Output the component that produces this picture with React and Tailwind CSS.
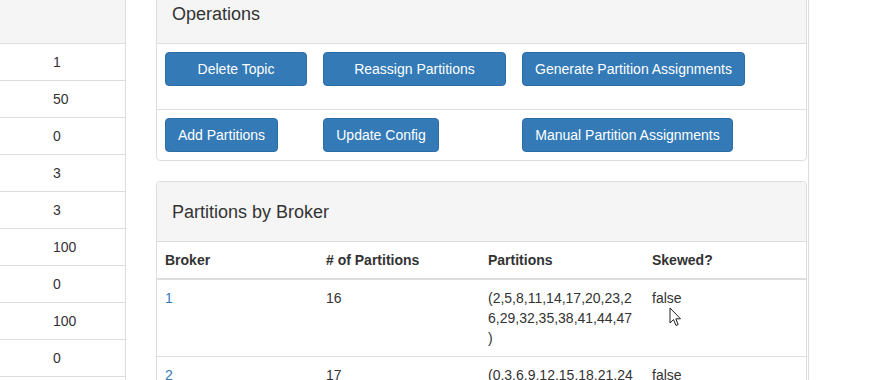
import React from 'react';

const leftValues = ['1', '50', '0', '3', '3', '100', '0', '100', '0', ''];

const opsRows = [
    {
        height: 'h-[65px]',
        buttons: [
            { label: 'Delete Topic', w: 'w-[142px]' },
            { label: 'Reassign Partitions', w: 'w-[183px]' },
            { label: 'Generate Partition Assignments', w: 'w-[223px]' },
        ],
    },
    {
        height: 'h-[51px]',
        buttons: [
            { label: 'Add Partitions', w: 'w-[113px]' },
            { label: 'Update Config', w: 'w-[116px]' },
            { label: 'Manual Partition Assignments', w: 'w-[211px]' },
        ],
    },
];

// partitions lists, pre-wrapped the way the cell breaks them
const brokers = [
    { id: 1, count: 16, parts: ['(2,5,8,11,14,17,20,23,2', '6,29,32,35,38,41,44,47', ')'], skewed: 'false' },
    { id: 2, count: 17, parts: ['(0,3,6,9,12,15,18,21,24', ',27,30,33,36,39,42,45,4', '8)'], skewed: 'false' },
];

const Button = ({ label, w }) => (
    <button className={`${w} h-[34px] rounded-[4px] bg-[#337ab7] border border-[#2e6da4] text-white text-[14px] leading-[20px] text-center`}>
        {label}
    </button>
);

const Cursor = () => (
    <svg className="absolute left-[669px] top-[307px]" width="13" height="20" viewBox="0 0 13 20">
        <path d="M1 1 L1 16 L4.5 12.5 L7 18.5 L9.2 17.5 L6.8 11.8 L11.5 11.8 Z" fill="#fff" stroke="#222" strokeWidth="1" strokeLinejoin="round" />
    </svg>
);

export default function App() {
    return (
        <div className="relative w-[890px] h-[380px] overflow-hidden bg-white text-[#333] text-[14px] leading-[20px] font-['Liberation_Sans',Arial,sans-serif]">
            <div className="flex items-start">
                {/* left stats column */}
                <div className="w-[126px] shrink-0 border-r border-[#ddd]">
                    <div className="h-[44px] bg-[#f5f5f5] border-b border-[#ddd]"></div>
                    {leftValues.map((v, i) => (
                        <div key={i} className="h-[37px] border-b border-[#ddd] pl-[53px] flex items-center">
                            {v}
                        </div>
                    ))}
                </div>

                {/* main panels */}
                <div className="ml-[30px] w-[651px] shrink-0 -mt-[17px]">
                    <div className="border border-[#ddd] rounded-[4px] bg-white">
                        <div className="h-[60px] bg-[#f5f5f5] border-b border-[#ddd] px-[15px] flex items-center rounded-t-[3px]">
                            <h3 className="text-[18px] leading-[20px]">Operations</h3>
                        </div>
                        {opsRows.map((row, i) => (
                            <div key={i} className={`${row.height} flex items-start pt-[8px] ${i > 0 ? 'border-t border-[#ddd]' : ''}`}>
                                <div className="w-[158px] pl-[8px]"><Button {...row.buttons[0]} /></div>
                                <div className="w-[199px] pl-[8px]"><Button {...row.buttons[1]} /></div>
                                <div className="pl-[8px]"><Button {...row.buttons[2]} /></div>
                            </div>
                        ))}
                    </div>

                    <div className="mt-[20px] border border-[#ddd] rounded-[4px] bg-white">
                        <div className="h-[60px] bg-[#f5f5f5] border-b border-[#ddd] px-[15px] flex items-center rounded-t-[3px]">
                            <h3 className="text-[18px] leading-[20px]">Partitions by Broker</h3>
                        </div>
                        <table className="table-fixed w-[649px] border-collapse">
                            <colgroup>
                                <col className="w-[161px]" />
                                <col className="w-[162px]" />
                                <col className="w-[164px]" />
                                <col className="w-[162px]" />
                            </colgroup>
                            <thead>
                                <tr className="border-b-2 border-[#ddd]">
                                    <th className="text-left font-bold p-[8px] align-bottom">Broker</th>
                                    <th className="text-left font-bold p-[8px] align-bottom"># of Partitions</th>
                                    <th className="text-left font-bold p-[8px] align-bottom">Partitions</th>
                                    <th className="text-left font-bold p-[8px] align-bottom">Skewed?</th>
                                </tr>
                            </thead>
                            <tbody>
                                {brokers.map((b, i) => (
                                    <tr key={b.id} className={i > 0 ? 'border-t border-[#ddd]' : ''}>
                                        <td className="p-[8px] align-top"><a className="text-[#337ab7]">{b.id}</a></td>
                                        <td className="p-[8px] align-top">{b.count}</td>
                                        <td className="p-[8px] align-top whitespace-nowrap">
                                            {b.parts.map((line, j) => (
                                                <span key={j} className="block">{line}</span>
                                            ))}
                                        </td>
                                        <td className="p-[8px] align-top">{b.skewed}</td>
                                    </tr>
                                ))}
                            </tbody>
                        </table>
                    </div>
                </div>

                <div className="ml-[1px] w-px h-[380px] bg-[#ddd] shrink-0"></div>
            </div>
            <Cursor />
        </div>
    );
}
